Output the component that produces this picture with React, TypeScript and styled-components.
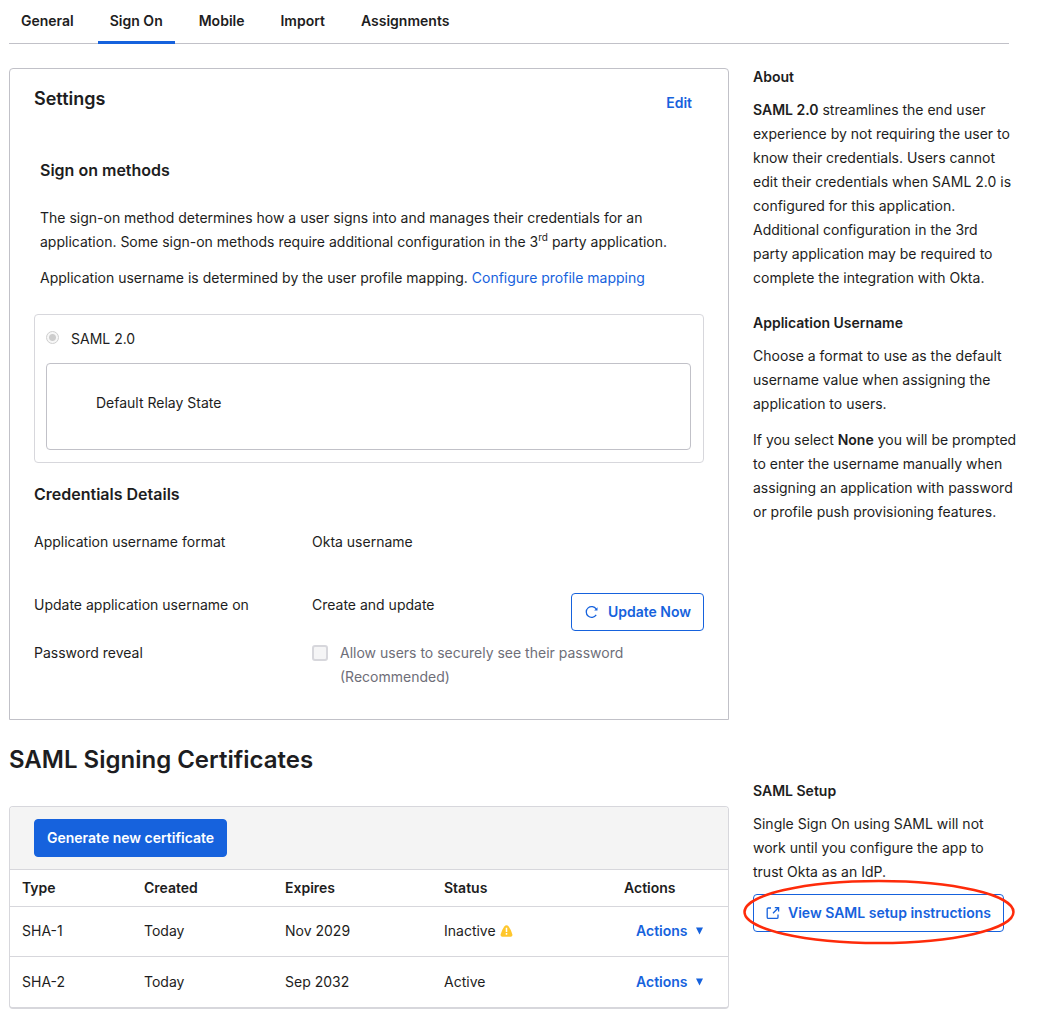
import React from "react";
import styled, { createGlobalStyle, css } from "styled-components";

const color = {
  text: "#1d1d21",
  muted: "#6e6e78",
  blue: "#1662dd",
  border: "#c1c1c8",
  light: "#d7d7dc",
  surface: "#f4f4f4",
};

const GlobalStyle = createGlobalStyle`
  *, *::before, *::after { box-sizing: border-box; }
  body {
    margin: 0;
    background: #fff;
    color: ${color.text};
    font: 400 14px/24px Inter, "Liberation Sans", sans-serif;
  }
  h1, h2, h3, h4, p { margin: 0; }
  button { font: inherit; cursor: pointer; }
`;

const Page = styled.div`
  padding: 0 23px 20px 9px;
`;

const Tabs = styled.nav`
  display: flex;
  gap: 12px;
  height: 44px;
  margin-right: 8px;
  padding-top: 9px;
  box-shadow: inset 0 -1px 0 ${color.border};
`;

const Tab = styled.a<{ $active?: boolean }>`
  padding: 0 12px;
  border-bottom: 3px solid ${(p) => (p.$active ? color.blue : "transparent")};
  color: ${color.text};
  font-weight: 600;
  text-decoration: none;
`;

const Layout = styled.div`
  display: grid;
  grid-template-columns: minmax(0, 720fr) minmax(0, 264fr);
  gap: 24px;
  align-items: start;
  padding-top: 24px;
`;

const Card = styled.section`
  padding: 18px 24px 30px;
  border: 1px solid ${color.border};
  border-radius: 4px 4px 0 0;
`;

const CardHeader = styled.header`
  display: flex;
  justify-content: space-between;
  align-items: flex-start;
  margin-bottom: 43px;
`;

const CardTitle = styled.h2`
  font-size: 18px;
  font-weight: 600;
`;

const TextButton = styled.button`
  padding: 0 12px;
  border: 0;
  background: none;
  color: ${color.blue};
  font-weight: 600;
`;

const EditButton = styled(TextButton)`
  padding-top: 4px;
`;

const SectionTitle = styled.h3`
  font-size: 16px;
  font-weight: 600;
  margin-bottom: 24px;
`;

const Methods = styled.div`
  padding: 0 6px;
  margin-bottom: 24px;

  p + p { margin-top: 12px; }
  sup { font-size: 10px; line-height: 0; }
`;

const Link = styled.a`
  color: ${color.blue};
  text-decoration: none;
`;

const MethodBox = styled.div`
  padding: 12px 12px 12px 11px;
  margin-bottom: 19px;
  border: 1px solid ${color.light};
  border-radius: 4px;
`;

const RadioLabel = styled.label`
  display: flex;
  gap: 12px;
  margin-bottom: 12px;
`;

const Radio = styled.input`
  appearance: none;
  width: 13px;
  height: 13px;
  margin: 4px 0 0;
  border: 1px solid #cfcfcf;
  border-radius: 50%;
  background: radial-gradient(circle, #cdcdcd 0 3px, #f7f7f7 4px);
`;

const RelayBox = styled.div`
  padding: 27px 49px 34px;
  border: 1px solid ${color.border};
  border-radius: 4px;
`;

const Row = styled.div<{ $tall?: boolean }>`
  display: grid;
  grid-template-columns: 278px 1fr auto;
  align-items: start;
  min-height: ${(p) => (p.$tall ? "53px" : "38px")};

  & + & { margin-top: 10px; }
`;

const CheckLabel = styled.label`
  display: flex;
  gap: 12px;
  color: ${color.muted};
`;

const Checkbox = styled.input`
  appearance: none;
  flex: none;
  width: 16px;
  height: 16px;
  margin: 4px 0 0;
  border: 2px solid ${color.light};
  border-radius: 3px;
  background: #f5f5f6;
`;

const buttonBase = css`
  display: inline-flex;
  align-items: center;
  height: 38px;
  padding: 0 12px;
  border: 1px solid ${color.blue};
  border-radius: 4px;
  font-weight: 600;
  white-space: nowrap;
  text-decoration: none;
`;

const PrimaryButton = styled.button`
  ${buttonBase}
  background: ${color.blue};
  color: #fff;
`;

const OutlineButton = styled.button`
  ${buttonBase}
  gap: 8px;
  background: #fff;
  color: ${color.blue};
`;

const OutlineLink = styled.a`
  ${buttonBase}
  gap: 8px;
  background: #fff;
  color: ${color.blue};
`;

const Aside = styled.aside<{ $offset?: boolean }>`
  padding-top: ${(p) => (p.$offset ? "38px" : "0")};

  p + p { margin-top: 12px; }
  p + h4 { margin-top: 24px; }
`;

const AsideTitle = styled.h4`
  margin-bottom: 12px;
  font-size: 14px;
  line-height: 18px;
  font-weight: 600;
`;

const Strong = styled.strong`
  font-weight: 600;
`;

const Callout = styled.div`
  position: relative;
  width: fit-content;
  margin-top: 10px;
`;

const CalloutRing = styled.svg`
  position: absolute;
  left: -10px;
  top: -15px;
  width: calc(100% + 21px);
  height: 66px;
  overflow: visible;
  pointer-events: none;
`;

const PageTitle = styled.h1`
  margin-bottom: 30px;
  font-size: 24px;
  line-height: 32px;
  font-weight: 600;
`;

const TableCard = styled.div`
  border: 1px solid ${color.light};
  border-bottom-width: 2px;
  border-radius: 4px;
  overflow: hidden;
`;

const Toolbar = styled.div`
  padding: 12px 24px;
  border-bottom: 1px solid ${color.light};
  background: ${color.surface};
`;

const Table = styled.table`
  width: 100%;
  table-layout: fixed;
  border-collapse: collapse;
  text-align: left;

  th, td { padding: 0 12px; }
  th { height: 36px; font-weight: 600; }
  td { height: 50px; border-top: 1px solid ${color.light}; }
  tbody tr:last-child td { height: 51px; }
`;

const StatusCell = styled.span`
  display: inline-flex;
  align-items: center;
  gap: 4px;
`;

const ActionsButton = styled(TextButton)`
  display: inline-flex;
  align-items: center;
  gap: 8px;
  white-space: nowrap;
`;

const RefreshIcon = () => (
  <svg width="16" height="16" viewBox="0 0 16 16" fill="none" stroke="currentColor" strokeWidth="1.3" aria-hidden="true">
    <path d="M12.2 10.9A5.4 5.4 0 1 1 12.2 5" />
    <path d="M13.5 3.2v3.3h-3.3Z" fill="currentColor" stroke="none" />
  </svg>
);

const ExternalIcon = () => (
  <svg width="14" height="14" viewBox="0 0 14 14" fill="none" stroke="currentColor" strokeWidth="1.3" aria-hidden="true">
    <path d="M5 2H2.4Q1.2 2 1.2 3.2v8Q1.2 12.4 2.4 12.4h8.4q1.2 0 1.2-1.2V8.6" />
    <path d="M8.8 1.6h3.8v3.8M12.4 1.8 7 7.2" />
  </svg>
);

const WarningIcon = () => (
  <svg width="13" height="12" viewBox="0 0 13 12" role="img" aria-label="Warning">
    <path d="M4.3 1.5Q6.5-1 8.7 1.5 11.2 4.8 12.4 9.6 12.7 11.6 10.8 11.7H2.2Q.3 11.6.6 9.6 1.8 4.8 4.3 1.5Z" fill="#ffc72c" />
    <path d="M6.5 2.7v4.2M6.5 8.1v1.7" stroke="#fff" strokeWidth="1.5" />
  </svg>
);

const CaretIcon = () => (
  <svg width="7" height="8" viewBox="0 0 7 8" aria-hidden="true">
    <path d="M0 .5h7L3.5 7.5Z" fill="currentColor" />
  </svg>
);

const tabs = ["General", "Sign On", "Mobile", "Import", "Assignments"];

const columns = [
  { name: "Type", width: 122 },
  { name: "Created", width: 141 },
  { name: "Expires", width: 159 },
  { name: "Status", width: 180 },
  { name: "Actions", width: 116 },
];

const certificates = [
  { type: "SHA-1", created: "Today", expires: "Nov 2029", status: "Inactive", warn: true },
  { type: "SHA-2", created: "Today", expires: "Sep 2032", status: "Active", warn: false },
];

export default function App() {
  return (
    <>
      <GlobalStyle />
      <Page>
        <Tabs>
          {tabs.map((t) => (
            <Tab key={t} href="#" $active={t === "Sign On"}>{t}</Tab>
          ))}
        </Tabs>
        <Layout>
          <Card>
            <CardHeader>
              <CardTitle>Settings</CardTitle>
              <EditButton type="button">Edit</EditButton>
            </CardHeader>
            <Methods>
              <SectionTitle>Sign on methods</SectionTitle>
              <p>
                The sign-on method determines how a user signs into and manages their credentials for an
                application. Some sign-on methods require additional configuration in the 3<sup>rd</sup> party application.
              </p>
              <p>
                Application username is determined by the user profile mapping.{" "}
                <Link href="#">Configure profile mapping</Link>
              </p>
            </Methods>
            <MethodBox>
              <RadioLabel>
                <Radio type="radio" name="method" defaultChecked disabled />
                SAML 2.0
              </RadioLabel>
              <RelayBox>Default Relay State</RelayBox>
            </MethodBox>
            <SectionTitle>Credentials Details</SectionTitle>
            <Row $tall>
              <span>Application username format</span>
              <span>Okta username</span>
            </Row>
            <Row>
              <span>Update application username on</span>
              <span>Create and update</span>
              <OutlineButton type="button"><RefreshIcon />Update Now</OutlineButton>
            </Row>
            <Row>
              <span>Password reveal</span>
              <CheckLabel>
                <Checkbox type="checkbox" disabled />
                <span>Allow users to securely see their password (Recommended)</span>
              </CheckLabel>
            </Row>
          </Card>
          <Aside>
            <AsideTitle>About</AsideTitle>
            <p>
              <Strong>SAML 2.0</Strong> streamlines the end user<br />
              experience by not requiring the user to<br />
              know their credentials. Users cannot<br />
              edit their credentials when SAML 2.0 is<br />
              configured for this application.<br />
              Additional configuration in the 3rd<br />
              party application may be required to<br />
              complete the integration with Okta.
            </p>
            <AsideTitle>Application Username</AsideTitle>
            <p>
              Choose a format to use as the default<br />
              username value when assigning the<br />
              application to users.
            </p>
            <p>
              If you select <Strong>None</Strong> you will be prompted<br />
              to enter the username manually when<br />
              assigning an application with password<br />
              or profile push provisioning features.
            </p>
          </Aside>
          <section>
            <PageTitle>SAML Signing Certificates</PageTitle>
            <TableCard>
              <Toolbar>
                <PrimaryButton type="button">Generate new certificate</PrimaryButton>
              </Toolbar>
              <Table>
                <colgroup>
                  {columns.map((c) => <col key={c.name} width={c.width} />)}
                </colgroup>
                <thead>
                  <tr>{columns.map((c) => <th key={c.name} scope="col">{c.name}</th>)}</tr>
                </thead>
                <tbody>
                  {certificates.map((c) => (
                    <tr key={c.type}>
                      <td>{c.type}</td>
                      <td>{c.created}</td>
                      <td>{c.expires}</td>
                      <td><StatusCell>{c.status}{c.warn && <WarningIcon />}</StatusCell></td>
                      <td><ActionsButton type="button">Actions<CaretIcon /></ActionsButton></td>
                    </tr>
                  ))}
                </tbody>
              </Table>
            </TableCard>
          </section>
          <Aside $offset>
            <AsideTitle>SAML Setup</AsideTitle>
            <p>
              Single Sign On using SAML will not<br />
              work until you configure the app to<br />
              trust Okta as an IdP.
            </p>
            <Callout>
              <OutlineLink href="#"><ExternalIcon />View SAML setup instructions</OutlineLink>
              <CalloutRing viewBox="0 0 271 66" preserveAspectRatio="none" aria-hidden="true">
                <ellipse cx="135.5" cy="33" rx="134" ry="31" fill="none" stroke="#fe2b0a" strokeWidth="2.5" />
              </CalloutRing>
            </Callout>
          </Aside>
        </Layout>
      </Page>
    </>
  );
}
